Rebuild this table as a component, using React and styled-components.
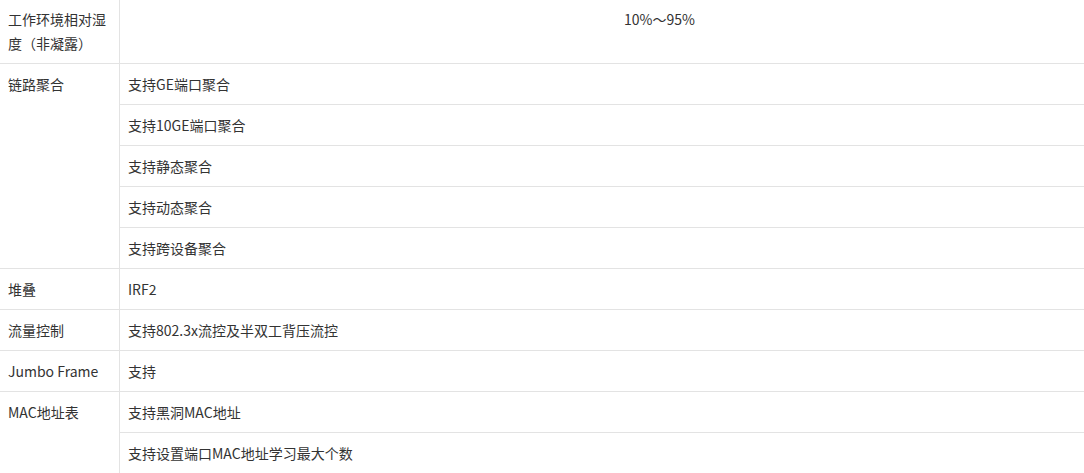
import React from "react";
import styled, { createGlobalStyle } from "styled-components";

const GlobalStyle = createGlobalStyle`
  html, body {
    margin: 0;
    padding: 0;
    overflow: hidden;
    background: #ffffff;
  }
`;

const Viewport = styled.div`
  width: 100%;
  overflow: hidden;
`;

const Sheet = styled.div`
  display: grid;
  grid-template-columns: 119px 1fr;
  width: 1199px;
  margin-top: -1px;
  font-family: "Microsoft YaHei", "Noto Sans CJK SC", "Noto Sans", sans-serif;
  font-size: 14px;
  line-height: 24px;
  color: #333333;
`;

const Label = styled.div`
  grid-row: span ${({ span }) => span || 1};
  padding: 8px;
  border-bottom: 1px solid #e3e3e3;
`;

const Value = styled.div`
  padding: 8px;
  border-bottom: 1px solid #e3e3e3;
  border-left: 1px solid #e3e3e3;
  text-align: ${({ center }) => (center ? "center" : "left")};
  white-space: nowrap;
`;

const specs = [
  { name: "工作环境相对湿度（非凝露）", values: ["10%～95%"], center: true },
  {
    name: "链路聚合",
    values: [
      "支持GE端口聚合",
      "支持10GE端口聚合",
      "支持静态聚合",
      "支持动态聚合",
      "支持跨设备聚合",
    ],
  },
  { name: "堆叠", values: ["IRF2"] },
  { name: "流量控制", values: ["支持802.3x流控及半双工背压流控"] },
  { name: "Jumbo Frame", values: ["支持"] },
  { name: "MAC地址表", values: ["支持黑洞MAC地址", "支持设置端口MAC地址学习最大个数"] },
];

const App = () => {
  return (
    <Viewport>
      <GlobalStyle />
      <Sheet>
        {specs.map((row) => (
          <React.Fragment key={row.name}>
            <Label span={row.values.length}>{row.name}</Label>
            {row.values.map((v) => (
              <Value key={v} center={row.center}>
                {v}
              </Value>
            ))}
          </React.Fragment>
        ))}
      </Sheet>
    </Viewport>
  );
};

export default App;
